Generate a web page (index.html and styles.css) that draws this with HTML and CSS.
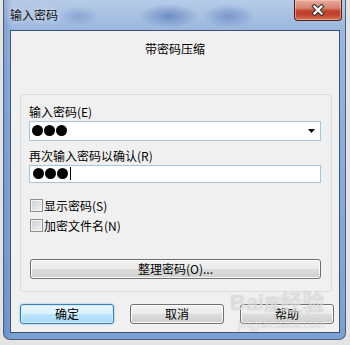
FILE: index.html
```html
<!DOCTYPE html>
<html>
	<head>
		<meta charset="utf-8">
		<link rel="stylesheet" href="styles.css">
	</head>
	<body>
		<div class="window">
			<header class="titlebar">
				<span class="title">输入密码</span>
				<div class="close">
					<svg width="14" height="12" viewBox="0 0 14 12">
						<path d="M3.5 2.5 L10.5 9.5 M10.5 2.5 L3.5 9.5" stroke="#3a3a3a" stroke-width="4.4" stroke-linecap="square"/>
						<path d="M3.5 2.5 L10.5 9.5 M10.5 2.5 L3.5 9.5" stroke="#fff" stroke-width="2.2" stroke-linecap="square"/>
					</svg>
				</div>
			</header>

			<main class="client">
				<div class="heading">带密码压缩</div>

				<div class="group">
					<div class="label">输入密码(E)</div>
					<div class="combo">
						<span class="dots"><i></i><i></i><i></i></span>
						<svg class="arrow" width="7" height="4" viewBox="0 0 7 4"><path d="M0 0 H7 L3.5 4 Z" fill="#000"/></svg>
					</div>

					<div class="label second">再次输入密码以确认(R)</div>
					<div class="edit">
						<span class="dots"><i></i><i></i><i></i></span>
						<span class="caret"></span>
					</div>

					<div class="check first"><span class="box"></span>显示密码(S)</div>
					<div class="check"><span class="box"></span>加密文件名(N)</div>

					<div class="button wide">整理密码(O)...</div>
				</div>

				<div class="actions">
					<div class="button default">确定</div>
					<div class="button">取消</div>
					<div class="button">帮助</div>
				</div>
			</main>

			<div class="watermark">
				<span class="mark-logo">Bai<b>度</b>经验</span>
				<span class="mark-url">jingyan.baidu.com</span>
			</div>
		</div>
	</body>
</html>
```

FILE: styles.css
```css
body {
	margin: 0;
	padding: 0;
	width: 350px;
	height: 345px;
	overflow: hidden;
	background: #e4e4e4;
	font-family: "Noto Sans CJK SC", "Liberation Sans", sans-serif;
	font-size: 12px;
	color: #000;
}

.window {
	position: relative;
	box-sizing: border-box;
	width: 343px;
	height: 340px;
	margin-left: 3px;
	padding: 0 5px 6px 6px;
	border: 1px solid #4d5f78;
	border-top: none;
	border-radius: 0 0 7px 7px;
	display: flex;
	flex-direction: column;
	background:
		radial-gradient(ellipse 30px 12px at 165px 16px, rgba(60, 100, 170, 0.55), transparent),
		radial-gradient(ellipse 26px 12px at 225px 16px, rgba(60, 100, 170, 0.45), transparent),
		radial-gradient(ellipse 20px 10px at 75px 16px, rgba(80, 115, 180, 0.35), transparent),
		linear-gradient(90deg, rgba(70, 110, 180, 0.35) 0px, transparent 8px),
		linear-gradient(180deg, #b7cbe8 0px, #9bb7de 30px, #8badd9 150px, #7aa1d3 340px);
}

.titlebar {
	height: 30px;
	margin-left: -6px;
	margin-right: -5px;
	display: flex;
	justify-content: space-between;
	align-items: flex-start;
}
.titlebar .title {
	margin-left: 6px;
	margin-top: 7px;
	line-height: 16px;
	color: #111;
	text-shadow: 0 0 6px rgba(255, 255, 255, 0.8);
}
.titlebar .close {
	box-sizing: border-box;
	width: 48px;
	height: 21px;
	margin-right: 3px;
	border: 1px solid #4f2019;
	border-top: none;
	border-radius: 0 0 4px 4px;
	display: flex;
	align-items: center;
	justify-content: center;
	background: linear-gradient(180deg, #e8ab9b 0%, #d88470 40%, #c0402a 55%, #c4452e 75%, #d9725a 100%);
	box-shadow: inset 0 0 0 1px rgba(255, 220, 210, 0.45);
}

.client {
	box-sizing: border-box;
	height: 304px;
	border: 1px solid #3c5272;
	background: #f0f0f0;
}

.heading {
	margin-top: 10px;
	line-height: 16px;
	text-align: center;
}

.group {
	margin: 37px 7px 0 9px;
	padding: 9px 10px 12px 8px;
	border: 1px solid #d5dfe5;
	border-radius: 3px;
	display: flex;
	flex-direction: column;
}

.label {
	line-height: 16px;
}
.label.second {
	margin-top: 7px;
}

.combo, .edit {
	box-sizing: border-box;
	margin-top: 1px;
	border: 1px solid #a3c5de;
	background: #fff;
	display: flex;
	align-items: center;
	padding-left: 2px;
}
.combo {
	height: 20px;
	padding-right: 5px;
	justify-content: space-between;
}
.edit {
	height: 18px;
	padding-left: 3px;
}

.dots {
	display: flex;
	gap: 1px;
}
.dots i {
	width: 11px;
	height: 11px;
	border-radius: 50%;
	background: #000;
}
.caret {
	width: 1px;
	height: 13px;
	margin-left: 2px;
	background: #000;
}

.check {
	display: flex;
	align-items: center;
	gap: 1px;
	height: 13px;
	line-height: 13px;
	margin-top: 7px;
	margin-left: 1px;
}
.check.first {
	margin-top: 16px;
}
.check .box {
	box-sizing: border-box;
	width: 13px;
	height: 13px;
	border: 1px solid #8e8f8f;
	background: linear-gradient(135deg, #cbcfd5 0%, #f2f3f5 100%);
	box-shadow: inset 0 0 0 1px #f4f4f4;
}

.button {
	box-sizing: border-box;
	height: 20px;
	border: 1px solid #707070;
	border-radius: 3px;
	display: flex;
	align-items: center;
	justify-content: center;
	background: linear-gradient(180deg, #f2f2f2 0%, #ebebeb 50%, #dddddd 51%, #cfcfcf 100%);
	box-shadow: inset 0 0 0 1px #fbfbfb;
}
.button.wide {
	margin-top: 27px;
	margin-left: 1px;
}
.button.default {
	border-color: #3c7fb1;
	background: linear-gradient(180deg, #eaf6fd 0%, #d9f0fc 50%, #bee6fd 51%, #a7d9f5 100%);
	box-shadow: inset 0 0 0 1px #cfeafb, 0 0 2px #5fb2e8;
}

.actions {
	display: flex;
	gap: 16px;
	margin: 12px 0 0 9px;
}
.actions .button {
	width: 94px;
}

.watermark {
	position: absolute;
	left: 226px;
	top: 290px;
	display: flex;
	flex-direction: column;
	color: rgba(255, 255, 255, 0.55);
	text-shadow: 0 0 1px rgba(110, 110, 110, 0.45);
	pointer-events: none;
}
.mark-logo {
	font-family: "Liberation Sans", "Noto Sans CJK SC", sans-serif;
	font-size: 22px;
	font-weight: bold;
	line-height: 26px;
}
.mark-logo b {
	font-size: 16px;
}
.mark-url {
	font-size: 10px;
	line-height: 12px;
	margin-left: 8px;
}
```
